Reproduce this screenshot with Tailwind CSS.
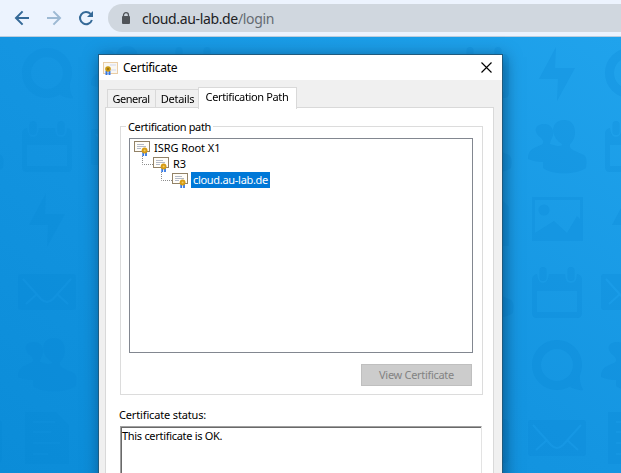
<!DOCTYPE html>
<html lang="en">
<head>
<meta charset="utf-8">
<title>Certificate</title>
<script src="https://cdn.jsdelivr.net/npm/@tailwindcss/browser@4"></script>
</head>
<body class="w-[621px] h-[473px] overflow-hidden bg-[#1295e0] font-['Noto_Sans',sans-serif] text-[11px] text-black">
<div class="relative flex h-[473px] w-[621px] flex-col overflow-hidden">
  <header class="flex h-[37px] shrink-0 items-center border-b border-[#bccddd] bg-[#ecf3fe] pl-[14px]">
    <svg class="h-4 w-4 shrink-0" viewBox="0 0 16 16" fill="none" stroke="#356997" stroke-width="2"><path d="M15 8H2.2M8.6 1.4L2 8l6.6 6.6"/></svg>
    <svg class="ml-4 h-4 w-4 shrink-0" viewBox="0 0 16 16" fill="none" stroke="#9db9d3" stroke-width="2"><path d="M1 8h12.8M7.4 1.4L14 8l-6.6 6.6"/></svg>
    <svg class="ml-4 h-4 w-4 shrink-0" viewBox="0 0 16 16" fill="none" stroke="#356997" stroke-width="2"><path d="M13.9 10A6.1 6.1 0 1 1 12.6 3.9"/><path d="M15 1v6H9z" fill="#356997" stroke="none"/></svg>
    <div class="ml-[14px] flex h-7 w-[540px] shrink-0 items-center rounded-l-full bg-[#d0d7df] pl-[13px] text-[14px]">
      <svg class="mb-px h-3 w-[10px]" viewBox="0 0 10 12"><path d="M2.5 5V3.2a2.5 2.5 0 0 1 5 0V5" fill="none" stroke="#505459" stroke-width="1.3"/><rect x="1" y="4" width="8" height="8" rx="1" fill="#505459"/></svg>
      <span class="ml-[11px] whitespace-nowrap tracking-[-0.35px] text-[#202124]">cloud.au-lab.de<span class="text-[#656b72]">/login</span></span>
    </div>
  </header>

  <main class="relative h-[436px]">
    <svg class="h-[436px] w-[621px]" viewBox="0 37 621 436">
      <defs>
        <linearGradient id="sky" x1="0" y1="1" x2="1" y2="0"><stop offset="0" stop-color="#0b8cd8"/><stop offset=".5" stop-color="#1495e1"/><stop offset="1" stop-color="#20a3ec"/></linearGradient>
        <g id="chat"><circle r="20.5" fill="none" stroke="#0580cf" stroke-width="9"/><path d="M23 9q-1 8 3 16-6 1-13-3z"/></g>
        <g id="cal"><path d="M-25-13q0-5 5-6 1 9 6 9t6-9H8q0 9 6 9t6-9q5 1 5 6v33q0 5-5 5h-40q-5 0-5-5zM-20-2v21h40V-2z" fill-rule="evenodd"/><rect x="-17.5" y="-26" width="7" height="14" rx="3.5"/><rect x="10.5" y="-26" width="7" height="14" rx="3.5"/></g>
        <path id="bolt" d="M-1-27l-17 32H1L0 27l18-33H-2z"/>
        <g id="mail"><rect x="-29" y="-18" width="58" height="36" rx="3"/><path d="M-24-13L-6 7q6 6 12 0L24-13M-21 12L-10 2M21 12L10 2" fill="none" stroke="#1fa2f0" stroke-width="2"/></g>
        <path id="people" d="M7-27c14 0 13 19 6 24-2 6 6 7 14 11 4 3 2 10 2 13-10 7-34 7-43 0v-6c-5 0-11-1-15-3 0-7 2-10 13-14 4-2 2-5 0-7-8-6-7-14 4-14 4 0 7 3 8 7 1 6-3 9-3 13l7 2C7-1 6-3 2-5-8-15-4-27 7-27z"/>
        <path id="doc" d="M-22-26H9L22-13v39h-44zM-14-17v2H8v-2zM-14-7v2H4v-2zM-14 4v2h27V4zM-14 15v2H1v-2z" fill-rule="evenodd"/>
        <path id="pic" d="M-25-22h51v44h-51zM-22-19v33l19-12 13 12L20-3l3 3v-19z" fill-rule="evenodd"/>
      </defs>
      <rect y="37" width="621" height="436" fill="url(#sky)"/>
      <g fill="#0580cf" opacity=".2">
        <g opacity=".7">
          <use href="#chat" x="47" y="73"/><use href="#cal" x="47" y="147"/><use href="#bolt" x="47" y="220"/><use href="#mail" x="47" y="292"/><use href="#people" x="47" y="365"/><use href="#doc" x="47" y="438"/>
          <use href="#people" x="-26" y="147"/><use href="#cal" x="-23" y="438"/>
          <use href="#people" x="120" y="73"/><use href="#mail" x="120" y="147"/><use href="#cal" x="193" y="73"/>
        </g>
        <use href="#cal" x="484" y="73"/><use href="#people" x="482" y="147"/><use href="#doc" x="487" y="220"/><use href="#people" x="484" y="292"/><use href="#cal" x="484" y="438"/>
        <use href="#bolt" x="557" y="74"/><use href="#people" x="557" y="147"/><use href="#pic" x="557" y="219"/><circle cx="544" cy="210" r="5.5"/><use href="#cal" x="557" y="293"/><use href="#chat" x="557" y="365"/><use href="#mail" x="557" y="438"/>
        <use href="#chat" x="630" y="73"/><use href="#cal" x="630" y="147"/><use href="#bolt" x="630" y="220"/><use href="#mail" x="630" y="292"/><use href="#people" x="630" y="365"/><use href="#doc" x="630" y="438"/>
      </g>
    </svg>
  </main>

  <section class="absolute left-[98px] top-[54px] flex h-[450px] w-[405px] flex-col border border-[#1f5a7e] bg-[#f0f0f0] shadow-[2px_3px_15px_rgba(0,25,50,0.5)]">
    <div class="flex h-[25px] shrink-0 items-center bg-white pl-1 pr-[10px]">
      <svg class="h-[14px] w-[15px] shrink-0" viewBox="0 0 15 14"><rect x=".5" y="1.5" width="14" height="11" fill="#faf7f2" stroke="#eacda5"/><path d="M7 4h6M8 9h5" stroke="#e6e8f0" stroke-width="2"/><path d="M3.5 10v4M6.5 10v4" stroke="#3478e5" stroke-width="2"/><circle cx="5" cy="8" r="2.8" fill="#c99811"/><circle cx="5" cy="8" r="1" fill="#966b0c"/></svg>
      <h1 class="ml-[5px] grow text-[12px] leading-4 tracking-[-0.3px]">Certificate</h1>
      <svg class="h-[11px] w-[11px]" viewBox="0 0 11 11"><path d="M.5.5l10 10M10.5.5l-10 10" stroke="#000" stroke-width="1.15"/></svg>
    </div>
    <div class="flex h-[28px] shrink-0 items-end pl-2 leading-[15px]">
      <div class="z-10 flex h-[19px] w-[49px] items-center justify-center border border-b-0 border-[#d9d9d9] pb-[2px] pr-px whitespace-nowrap"><span class="tracking-[-0.5px]">General</span></div>
      <div class="z-10 flex h-[19px] w-[42px] items-center justify-center border-t border-[#d9d9d9] pb-[2px] pl-px whitespace-nowrap"><span class="tracking-[-0.25px]">Details</span></div>
      <div class="z-10 -mb-px flex h-[22px] w-[99px] justify-center border border-b-0 border-[#d9d9d9] bg-white pr-px pt-px whitespace-nowrap"><span class="tracking-[-0.36px]">Certification Path</span></div>
    </div>
    <div class="ml-[6px] -mt-px flex w-[389px] grow flex-col border border-[#d9d9d9] bg-white pl-[14px]">
      <fieldset class="relative mt-[18px] h-[269px] w-[363px] shrink-0 border border-[#dcdcdc] pl-2 pt-[11px]">
        <span class="absolute left-[5px] top-[-8px] bg-white px-[2px] leading-[15px] whitespace-nowrap tracking-[-0.36px]">Certification path</span>
        <div class="flex h-[215px] w-[344px] flex-col border border-[#828790] pl-1 pt-[1px]">
          <div class="flex h-4 items-center">
            <svg class="h-4 w-4" viewBox="0 0 16 16"><g id="cert"><rect x=".5" y="1.5" width="15" height="10" fill="#fffdf8" stroke="#928267"/><path d="M3 4.5h7M3 6.5h9M3 8.5h4" stroke="#b4bac8"/><path d="M9.2 11v5M12 11v5" stroke="#3478e5" stroke-width="1.8"/><circle cx="10.6" cy="10.5" r="2.9" fill="#d69b13"/><circle cx="10.6" cy="10.5" r="1" fill="#f2ca62"/></g></svg>
            <span class="ml-1 leading-4 tracking-[-0.07px]">ISRG Root X1</span>
          </div>
          <div class="flex h-4 items-center pl-[8px]">
            <svg class="h-4 w-[11px]" viewBox="0 0 11 16"><path d="M.5 0v8.5H11" fill="none" stroke="#8b8b8b" stroke-dasharray="1 1"/></svg>
            <svg class="h-4 w-4" viewBox="0 0 16 16"><use href="#cert"/></svg>
            <span class="ml-1 leading-4">R3</span>
          </div>
          <div class="flex h-4 items-center pl-[27px]">
            <svg class="h-4 w-[11px]" viewBox="0 0 11 16"><path d="M.5 0v8.5H11" fill="none" stroke="#8b8b8b" stroke-dasharray="1 1"/></svg>
            <svg class="h-4 w-4" viewBox="0 0 16 16"><use href="#cert"/></svg>
            <span class="ml-[3px] flex h-4 w-[79px] items-center justify-center bg-[#0078d7] leading-4 tracking-[-0.3px] whitespace-nowrap text-white">cloud.au-lab.de</span>
          </div>
        </div>
        <button disabled class="ml-[232px] mt-[11px] flex h-[22px] w-[111px] items-center justify-center border border-[#bfbfbf] bg-[#cccccc] tracking-[-0.3px] whitespace-nowrap text-[#838383]">View Certificate</button>
      </fieldset>
      <div class="-ml-px mt-[12px] h-[19px] shrink-0 leading-[15px] tracking-[-0.15px]">Certificate status:</div>
      <div class="h-[60px] w-[362px] shrink-0 border border-[#a0a0a0] border-r-[#e3e3e3]"><div class="h-full border-l border-t border-[#696969] leading-[15px] tracking-[-0.3px]">This certificate is OK.</div></div>
    </div>
  </section>
</div>
</body>
</html>
